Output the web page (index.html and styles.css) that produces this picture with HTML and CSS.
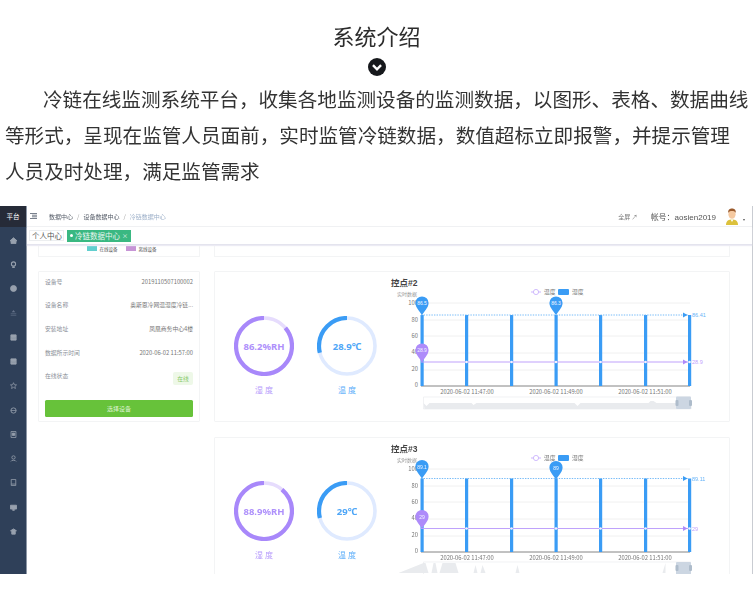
FILE: index.html
```html
<!DOCTYPE html>
<html lang="zh-CN">
<head>
<meta charset="utf-8">
<title>系统介绍</title>
<link rel="stylesheet" href="styles.css">
</head>
<body>
<svg class="defs" width="0" height="0" aria-hidden="true">
  <defs>
    <path id="pin" d="M0 12.5C-1 9.5-6.6 5-6.6 0A6.6 6.6 0 0 1 6.6 0C6.6 5 1 9.5 0 12.5Z"/>
    <g id="grid">
      <line x1="421" x2="690" y1="303" y2="303"/>
      <line x1="421" x2="690" y1="320" y2="320"/>
      <line x1="421" x2="690" y1="336" y2="336"/>
      <line x1="421" x2="690" y1="353" y2="353"/>
      <line x1="421" x2="690" y1="370" y2="370"/>
    </g>
    <g id="ylabels">
      <text x="418" y="305" text-anchor="end">100</text>
      <text x="418" y="322" text-anchor="end">80</text>
      <text x="418" y="338" text-anchor="end">60</text>
      <text x="418" y="354" text-anchor="end">40</text>
      <text x="418" y="371" text-anchor="end">20</text>
      <text x="418" y="387" text-anchor="end">0</text>
    </g>
    <g id="xlabels">
      <text x="467" y="394" text-anchor="middle">2020-06-02 11:47:00</text>
      <text x="556" y="394" text-anchor="middle">2020-06-02 11:49:00</text>
      <text x="645" y="394" text-anchor="middle">2020-06-02 11:51:00</text>
    </g>
    <g id="legend">
      <line class="c-line" x1="531" x2="541" y1="292" y2="292"/>
      <circle class="c-dot-l" cx="536" cy="292" r="2.6"/>
      <text x="544" y="294">温度</text>
      <rect class="c-bar" x="558" y="289" width="11" height="6" rx="1"/>
      <text x="572" y="294">湿度</text>
    </g>
  </defs>
</svg>

<header class="intro">
  <h1 class="title">系统介绍</h1>
  <svg class="chev" viewBox="0 0 16 16" width="18" height="18"><circle cx="8" cy="8" r="8" fill="#16181c"/><path d="M4.4 6.4 8 10l3.6-3.6" fill="none" stroke="#fff" stroke-width="2.1"/></svg>
  <p class="para">
    <span class="ln first">冷链在线监测系统平台，收集各地监测设备的监测数据，以图形、表格、数据曲线</span>
    <span class="ln">等形式，呈现在监管人员面前，实时监管冷链数据，数值超标立即报警，并提示管理</span>
    <span class="ln">人员及时处理，满足监管需求</span>
  </p>
</header>

<section class="shot">
  <aside class="side">
    <div class="brand">平台</div>
    <nav class="nav">
      <svg viewBox="0 0 8 8"><path d="M4 .8 8 4.4H6.8V7.5H1.2V4.4H0Z"/></svg>
      <svg viewBox="0 0 8 8"><circle cx="4" cy="3.4" r="2.4" fill="none" stroke-width="1.2"/><path d="M3 6.6h2v1H3z"/></svg>
      <svg viewBox="0 0 8 8"><circle cx="4" cy="4" r="3.4"/></svg>
      <svg viewBox="0 0 8 8" class="dim"><path d="M4 1 6 3.6H2ZM.8 5h6.4v.8H.8ZM.8 6.6h6.4v.7H.8Z"/></svg>
      <svg viewBox="0 0 8 8"><path d="M1 1h6v6H1Z"/><path d="M2 4h4v.8H2Z" fill="#2f4059"/></svg>
      <svg viewBox="0 0 8 8"><path d="M1 1h6v6H1Z"/><path d="M2 4h4v.8H2Z" fill="#2f4059"/></svg>
      <svg viewBox="0 0 8 8"><path d="M4 .8 5 3.1 7.5 3.3 5.6 5 6.2 7.4 4 6.1 1.8 7.4 2.4 5 .5 3.3 3 3.1Z" fill="none" stroke-width=".8"/></svg>
      <svg viewBox="0 0 8 8"><circle cx="4" cy="4" r="3" fill="none" stroke-width="1"/><path d="M1 4h6" stroke-width=".8"/></svg>
      <svg viewBox="0 0 8 8"><path d="M1.2.6h5.6v6.8H1.2Z" fill="none" stroke-width=".9"/><path d="M2.6 2.4h2.8v2.6H2.6Z"/></svg>
      <svg viewBox="0 0 8 8"><circle cx="4" cy="2.8" r="1.9" fill="none" stroke-width=".9"/><path d="M1 7.4C1.2 5.6 6.8 5.6 7 7.4" fill="none" stroke-width=".9"/></svg>
      <svg viewBox="0 0 8 8"><path d="M1.4.5h5.2v7H1.4Z" fill="none" stroke-width=".9"/><path d="M1.4 5.8h5.2" stroke-width=".9"/></svg>
      <svg viewBox="0 0 8 8"><path d="M.6 1.4h6.8v4.4H.6ZM3 6.4h2v.8H3Z"/></svg>
      <svg viewBox="0 0 8 8"><path d="M4 1 7.4 3.2 6 3.8V7H2V3.8L.6 3.2Z"/></svg>
    </nav>
  </aside>

  <div class="main">
    <div class="topbar">
      <svg class="burger" viewBox="0 0 7 6" width="7" height="6"><path d="M0 .5h7M2 2.2h5M2 3.8h5M0 5.5h7" stroke="#56606e" stroke-width=".8"/></svg>
      <div class="crumbs">
        <span>数据中心</span><i>/</i><span>设备数据中心</span><i>/</i><span class="cur">冷链数据中心</span>
      </div>
      <div class="tools">
        <span class="full">全屏 ↗</span>
        <span class="acct">帐号：aosien2019</span>
        <svg class="avatar" viewBox="0 0 12 17" width="12" height="17">
          <path d="M0 17C0 12.5 3 11.5 6 11.5S12 12.5 12 17Z" fill="#dcc13c"/>
          <ellipse cx="6" cy="6.2" rx="3.6" ry="4.6" fill="#f5c9a0"/>
          <path d="M2.2 5C1.8 1.5 4 .4 6 .4S10.2 1.5 9.8 5C9 3.4 8 3 6 3S3 3.4 2.2 5Z" fill="#9a5a2c"/>
          <path d="M4.6 11.5 6 14l1.4-2.5Z" fill="#fff"/>
        </svg>
        <span class="caret"></span>
      </div>
    </div>

    <div class="tabs">
      <span class="tab">个人中心</span>
      <span class="tab on"><b class="dot"></b>冷链数据中心<em>×</em></span>
    </div>

    <div class="content">
      <div class="card stub legend-card">
        <span class="sw teal"></span><span>在线设备</span>
        <span class="sw pink"></span><span>离线设备</span>
      </div>
      <div class="card stub"></div>

      <div class="card info">
        <dl class="rows">
          <div class="row"><dt>设备号</dt><dd>2019110507100002</dd></div>
          <div class="row"><dt>设备名称</dt><dd>奥斯恩冷网温湿度冷链...</dd></div>
          <div class="row"><dt>安装地址</dt><dd>凤凰商务中心4楼</dd></div>
          <div class="row"><dt>数据所示时间</dt><dd>2020-06-02 11:57:00</dd></div>
          <div class="row"><dt>在线状态</dt><dd><span class="tag">在线</span></dd></div>
        </dl>
        <div class="btn">选择设备</div>
      </div>

      <div class="card panel">
        <div class="gauges">
          <figure class="gauge hum">
            <svg viewBox="0 0 60 60" width="60" height="60">
              <circle class="track" cx="30" cy="30" r="28"/>
              <circle class="arc" cx="30" cy="30" r="28" pathLength="100" stroke-dasharray="86.2 100"/>
              <text x="30" y="33.5" text-anchor="middle">86.2%RH</text>
            </svg>
            <figcaption>湿 度</figcaption>
          </figure>
          <figure class="gauge tem">
            <svg viewBox="0 0 60 60" width="60" height="60">
              <circle class="track" cx="30" cy="30" r="28"/>
              <circle class="arc" cx="30" cy="30" r="28" pathLength="100" stroke-dasharray="28.9 100"/>
              <text x="30" y="33.5" text-anchor="middle">28.9℃</text>
            </svg>
            <figcaption>温 度</figcaption>
          </figure>
        </div>
        <svg class="chart" viewBox="380 271 350 151" width="350" height="151">
          <text class="ct" x="391" y="286">控点#2</text>
          <text class="sub" x="397" y="296">实时数据</text>
          <use href="#legend" class="lbl"/>
          <use href="#grid" class="grid"/>
          <use href="#ylabels" class="lbl"/>
          <line class="axis" x1="421" x2="690" y1="386" y2="386"/>
          <g class="c-bar">
            <rect x="420.500" y="315" width="3.200" height="71"/>
            <rect x="465" y="315" width="3.200" height="71"/>
            <rect x="510" y="315" width="3.200" height="71"/>
            <rect x="554.500" y="315" width="3.200" height="71"/>
            <rect x="599" y="315" width="3.200" height="71"/>
            <rect x="644" y="315" width="3.200" height="71"/>
            <rect x="688" y="315" width="3.200" height="71"/>
          </g>
          <line class="mark-b" x1="421" x2="688" y1="315" y2="315"/>
          <line class="c-line wide" x1="421" x2="688" y1="362" y2="362"/>
          <g class="c-dot">
            <circle cx="466.500" cy="362" r="1.300"/><circle cx="511.500" cy="362" r="1.300"/><circle cx="556" cy="362" r="1.300"/>
            <circle cx="600.500" cy="362" r="1.300"/><circle cx="645.500" cy="362" r="1.300"/><circle cx="689.500" cy="362" r="1.300"/>
          </g>
          <path class="c-bar" d="M683 312.500v5l4.500-2.500Z"/>
          <path class="c-pur" d="M683 359.500v5l4.500-2.500Z"/>
          <text class="end-b" x="692" y="317">86.41</text>
          <text class="end-p" x="692" y="364">28.9</text>
          <use href="#pin" class="c-bar" x="422" y="303"/>
          <use href="#pin" class="c-bar" x="556" y="303"/>
          <use href="#pin" class="c-pur" x="422" y="350"/>
          <text class="pin-t" x="422" y="305" text-anchor="middle">86.5</text>
          <text class="pin-t" x="556" y="305" text-anchor="middle">86.3</text>
          <text class="pin-t" x="422" y="352" text-anchor="middle">28.9</text>
          <use href="#xlabels" class="lbl"/>
          <path class="zoom-bg" d="M423.500 397h267v12h-267Z"/>
          <path class="zoom-area" d="M423.500 403l3 3 3-3h42l2 2 3-2h98l3 3 3-3h68l2-2 3 0 3 2h35v6h-267Z"/>
          <rect class="zoom-sel" x="676" y="396.500" width="15" height="12.500" rx="1"/>
          <rect class="zoom-h" x="675.500" y="400" width="3" height="6" rx="1"/>
          <rect class="zoom-h" x="689" y="400" width="3" height="6" rx="1"/>
        </svg>
      </div>

      <div class="card blank"></div>

      <div class="card panel">
        <div class="gauges">
          <figure class="gauge hum">
            <svg viewBox="0 0 60 60" width="60" height="60">
              <circle class="track" cx="30" cy="30" r="28"/>
              <circle class="arc" cx="30" cy="30" r="28" pathLength="100" stroke-dasharray="88.9 100"/>
              <text x="30" y="33.5" text-anchor="middle">88.9%RH</text>
            </svg>
            <figcaption>湿 度</figcaption>
          </figure>
          <figure class="gauge tem">
            <svg viewBox="0 0 60 60" width="60" height="60">
              <circle class="track" cx="30" cy="30" r="28"/>
              <circle class="arc" cx="30" cy="30" r="28" pathLength="100" stroke-dasharray="29 100"/>
              <text x="30" y="33.5" text-anchor="middle">29℃</text>
            </svg>
            <figcaption>温 度</figcaption>
          </figure>
        </div>
        <svg class="chart" viewBox="380 271 350 151" width="350" height="151">
          <text class="ct" x="391" y="286">控点#3</text>
          <text class="sub" x="397" y="296">实时数据</text>
          <use href="#legend" class="lbl"/>
          <use href="#grid" class="grid"/>
          <use href="#ylabels" class="lbl"/>
          <line class="axis" x1="421" x2="690" y1="386" y2="386"/>
          <g class="c-bar">
            <rect x="420.500" y="312.500" width="3.200" height="73.500"/>
            <rect x="465" y="312.500" width="3.200" height="73.500"/>
            <rect x="510" y="312.500" width="3.200" height="73.500"/>
            <rect x="554.500" y="312.500" width="3.200" height="73.500"/>
            <rect x="599" y="312.500" width="3.200" height="73.500"/>
            <rect x="644" y="312.500" width="3.200" height="73.500"/>
            <rect x="688" y="312.500" width="3.200" height="73.500"/>
          </g>
          <line class="mark-b" x1="421" x2="688" y1="312.500" y2="312.500"/>
          <line class="c-line wide" x1="421" x2="688" y1="362.500" y2="362.500"/>
          <g class="c-dot">
            <circle cx="466.500" cy="362.500" r="1.300"/><circle cx="511.500" cy="362.500" r="1.300"/><circle cx="556" cy="362.500" r="1.300"/>
            <circle cx="600.500" cy="362.500" r="1.300"/><circle cx="645.500" cy="362.500" r="1.300"/><circle cx="689.500" cy="362.500" r="1.300"/>
          </g>
          <path class="c-bar" d="M683 310v5l4.500-2.500Z"/>
          <path class="c-pur" d="M683 360v5l4.500-2.500Z"/>
          <text class="end-b" x="692" y="314.500">89.11</text>
          <text class="end-p" x="692" y="364.500">29</text>
          <use href="#pin" class="c-bar" x="422" y="300.500"/>
          <use href="#pin" class="c-bar" x="556" y="301.500"/>
          <use href="#pin" class="c-pur" x="422" y="350.500"/>
          <text class="pin-t" x="422" y="302.500" text-anchor="middle">89.1</text>
          <text class="pin-t" x="556" y="303.500" text-anchor="middle">89</text>
          <text class="pin-t" x="422" y="352.500" text-anchor="middle">29</text>
          <use href="#xlabels" class="lbl"/>
          <path class="zoom-bg" d="M423.500 396h267v13h-267Z"/>
          <path class="zoom-area" d="M423.500 397h2l3 10h3l2-10h2l2 10h2l3-10h13l3 10h15l2-8 2 8h3l2-8 3 8h30l2-8 2 8h143l3-10v10h-267Z"/>
          <rect class="zoom-sel" x="676" y="396" width="15" height="13" rx="1"/>
          <rect class="zoom-h" x="675.500" y="399" width="3" height="6" rx="1"/>
          <rect class="zoom-h" x="689" y="399" width="3" height="6" rx="1"/>
        </svg>
      </div>
    </div>
  </div>
</section>
</body>
</html>
```

FILE: styles.css
```css
* { box-sizing: border-box; }
html, body { margin: 0; padding: 0; background: #fff; }
body {
  width: 753px;
  height: 597px;
  overflow: hidden;
  font-family: "Noto Sans CJK SC", "Noto Sans", sans-serif;
  color: #333;
}
.defs { display: block; height: 0; }

/* intro */
.intro { display: flex; flex-direction: column; align-items: center; padding-top: 20px; filter: blur(.3px); }
.title { margin: 0; font-size: 22px; line-height: 30px; font-weight: 400; color: #2c2c2c; }
.chev { margin-top: 8px; display: block; }
.para { margin: 5px 0 0; width: 100%; padding-left: 5px; font-size: 19.6px; line-height: 36px; color: #333; }
.ln { display: block; white-space: nowrap; }
.ln.first { padding-left: 38px; }

/* embedded screenshot */
.shot {
  margin-top: 17px;
  height: 368px;
  display: flex;
  filter: blur(.6px);
  font-family: "Noto Sans CJK SC", "Liberation Sans", sans-serif;
  font-size: 6px;
  color: #667;
  border-right: 1px solid #c9ccd2;
}
.side { width: 27px; background: #2f4059; flex: none; border-right: 1px solid #8d97a6; }
.brand { height: 21px; background: #262b38; color: #fff; font-size: 6.5px; line-height: 21px; text-align: center; }
.nav { display: flex; flex-direction: column; align-items: center; gap: 17.3px; padding-top: 9.5px; }
.nav svg { width: 7px; height: 7px; display: block; fill: #98a1ae; stroke: #98a1ae; }
.nav svg.dim { fill: #65728a; stroke: none; }

.main { flex: 1; min-width: 0; display: flex; flex-direction: column; }
.topbar {
  height: 21px;
  display: flex;
  align-items: center;
  padding-left: 3px;
  border-bottom: 1px solid #f0f1f3;
  flex: none;
}
.burger { flex: none; }
.crumbs { margin-left: 12px; display: flex; gap: 4px; color: #555c68; font-size: 6px; }
.crumbs i { font-style: normal; color: #999; }
.crumbs .cur { color: #9db0c9; }
.tools { margin-left: auto; display: flex; align-items: center; padding-right: 7px; }
.full { font-size: 6px; color: #777; }
.acct { margin-left: 13px; font-family: "Liberation Sans", "Noto Sans CJK SC", sans-serif; font-size: 8px; color: #555; }
.avatar { margin-left: 10px; }
.caret { margin: 8px 0 0 5px; border: 1.5px solid transparent; border-top: 2px solid #555; }

.tabs {
  height: 18px;
  display: flex;
  align-items: center;
  gap: 3px;
  padding-left: 2px;
  flex: none;
  border-bottom: 1px solid #e4e4ee;
  box-shadow: 0 1px 1px #ecebf4;
  position: relative;
}
.tab { width: 35px; height: 11px; padding: 0 2px; border: 1px solid #eceef0; font-size: 7.5px; line-height: 9px; color: #555; background: #fff; white-space: nowrap; display: flex; align-items: center; }
.tab.on { height: 12px; width: 64px; background: #3ab882; border-color: #3ab882; color: #e8f6ef; padding: 0 2px; }
.dot { width: 3px; height: 3px; border-radius: 50%; background: #fff; margin-right: 2px; flex: none; }
.tab em { font-style: normal; margin-left: 2px; font-size: 6px; }

.content {
  flex: 1;
  min-height: 0;
  overflow: hidden;
  display: grid;
  grid-template-columns: 162px 516px;
  grid-template-rows: 11.5px 151px 151px;
  column-gap: 14px;
  row-gap: 14.5px;
  padding-left: 11px;
}
.card { border: 1px solid #f3f4f5; border-radius: 1px; background: #fff; }
.stub { border-top: 0; }
.blank { border: 0; }
.legend-card { display: flex; align-items: center; justify-content: center; gap: 3px; font-size: 4.5px; color: #555; padding-bottom: 3px; }
.sw { width: 10px; height: 5px; margin-left: 5px; }
.teal { background: #62cfcf; }
.pink { background: #c795d6; }

.info { padding: 0 6px; display: flex; flex-direction: column; }
.rows { margin: 0; padding-top: 4.5px; }
.row { height: 23.7px; display: flex; justify-content: space-between; align-items: flex-start; color: #777; font-size: 5.8px; }
.row dt { color: #8a8f98; }
.row dd { margin: 0; color: #777; }
.tag { display: inline-block; width: 20px; height: 13px; line-height: 13px; text-align: center; background: #eef8e8; color: #86c96a; border-radius: 2px; margin-top: 1px; }
.btn { margin-top: 5px; height: 17px; line-height: 17px; text-align: center; border-radius: 1.5px; background: #67c23a; color: #dff3d4; font-size: 6px; }

.panel { display: flex; overflow: visible; }
.gauges { display: flex; gap: 23px; width: 165px; padding: 43.500px 0 0 19px; flex: none; }
.gauge { margin: 0; width: 60px; text-align: center; }
.gauge svg { display: block; }
.gauge text { font-size: 9.500px; font-weight: 700; font-family: "Noto Sans", sans-serif; }
.gauge figcaption { margin-top: 8px; font-size: 8px; line-height: 12px; }
.track { fill: none; stroke-width: 3.600; }
.arc { fill: none; stroke-width: 4.200; transform: rotate(-90deg) scaleY(-1); transform-origin: 30px 30px; }
.hum .track { stroke: #e6dcfd; }
.hum .arc { stroke: #a888fa; }
.hum text { fill: #ae90fb; }
.hum figcaption { color: #b79cfb; }
.tem .track { stroke: #dfeaff; }
.tem .arc { stroke: #3a9cf5; }
.tem text { fill: #4ea6f7; }
.tem figcaption { color: #5daefa; }

.chart { display: block; flex: none; overflow: hidden; margin-top: -1px; }
.chart text { font-family: "Liberation Sans", "Noto Sans CJK SC", sans-serif; }
.ct { font-size: 8.500px; font-weight: 700; fill: #444; }
.sub { font-size: 5px; fill: #999; }
.lbl { font-size: 5.800px; fill: #777; }
.grid { stroke: #ececec; stroke-width: .8; }
.axis { stroke: #666; stroke-width: .8; }
.c-bar { fill: #3a9cf5; }
.c-pur { fill: #ae8bfa; }
.c-line { stroke: #bfa2fc; stroke-width: .8; }
.c-line.wide { stroke-width: 1.200; }
.c-dot-l { fill: #fff; stroke: #bfa2fc; stroke-width: .7; }
.c-dot { fill: #f4f0ff; }
.mark-b { stroke: #69b4f7; stroke-width: .9; stroke-dasharray: 1.400 1.200; }
.end-b { font-size: 5.500px; fill: #69b4f7; }
.end-p { font-size: 5.500px; fill: #bfa2fc; }
.pin-t { font-size: 5px; fill: #f2f6ff; }
.zoom-bg { fill: #fff; stroke: #e8eaec; stroke-width: .6; }
.zoom-area { fill: #e9ebee; }
.zoom-sel { fill: #ccd6e2; }
.zoom-h { fill: #aebccb; }
```
